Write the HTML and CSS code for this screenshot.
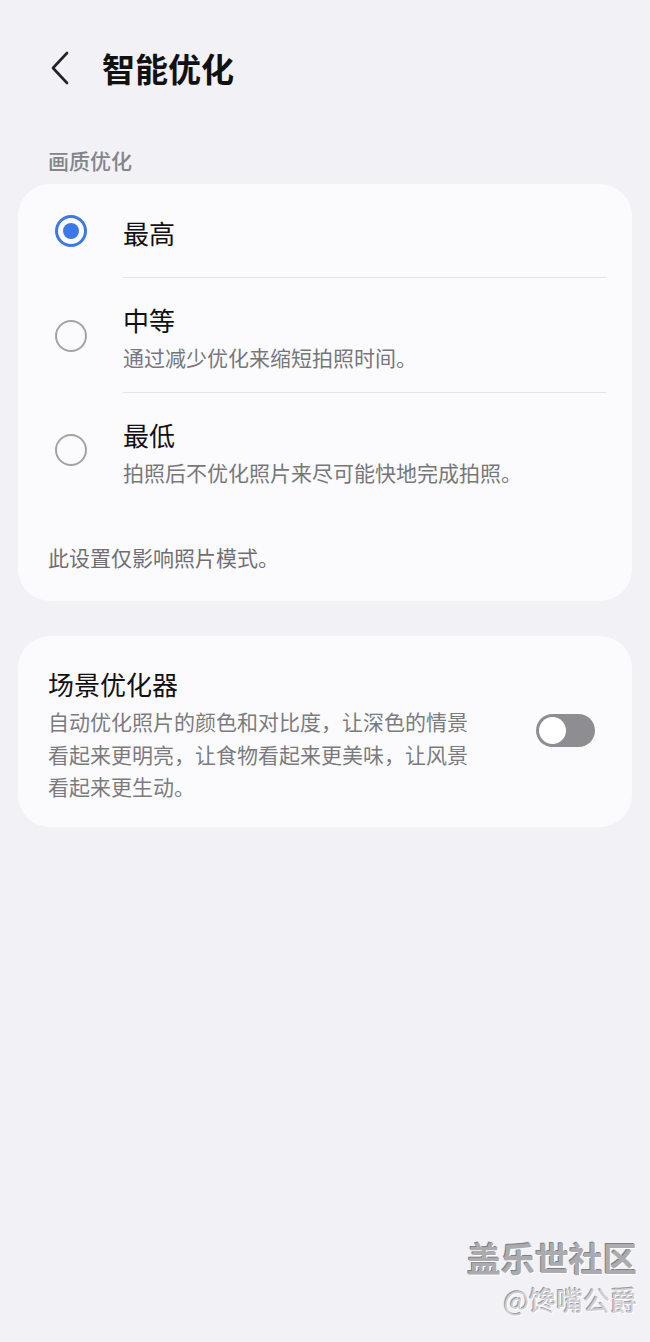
FILE: index.html
```html
<!DOCTYPE html>
<html lang="zh-CN">
<head>
    <meta charset="UTF-8">
    <meta name="viewport" content="width=device-width, initial-scale=1.0">
    <title>智能优化</title>
    <link rel="stylesheet" href="styles.css">
</head>
<body>

    <div class="page">
        <!-- Top bar -->
        <div class="top-bar">
            <svg class="back-icon" width="20" height="34" viewBox="0 0 20 34">
                <path d="M17 2 L3 17 L17 32" fill="none" stroke="#222" stroke-width="2.6" stroke-linecap="round" stroke-linejoin="round"/>
            </svg>
            <h1>智能优化</h1>
        </div>

        <!-- Picture quality options -->
        <p class="section-label">画质优化</p>
        <div class="card">
            <div class="option">
                <span class="radio checked"></span>
                <div class="option-text">
                    <div class="option-title">最高</div>
                </div>
            </div>
            <div class="option">
                <span class="radio"></span>
                <div class="option-text">
                    <div class="option-title">中等</div>
                    <div class="option-desc">通过减少优化来缩短拍照时间。</div>
                </div>
            </div>
            <div class="option last">
                <span class="radio"></span>
                <div class="option-text">
                    <div class="option-title">最低</div>
                    <div class="option-desc">拍照后不优化照片来尽可能快地完成拍照。</div>
                </div>
            </div>
            <p class="card-note">此设置仅影响照片模式。</p>
        </div>

        <!-- Scene optimizer -->
        <div class="card switch-card">
            <div class="switch-text">
                <div class="option-title">场景优化器</div>
                <div class="switch-desc">自动优化照片的颜色和对比度，让深色的情景看起来更明亮，让食物看起来更美味，让风景看起来更生动。</div>
            </div>
            <span class="toggle"><span class="knob"></span></span>
        </div>
    </div>

    <!-- Watermark -->
    <div class="watermark">
        <div class="wm-big">盖乐世社区</div>
        <div class="wm-small">@馋嘴公爵</div>
    </div>

</body>
</html>
```

FILE: styles.css
```css
/* Reset */
* {
    margin: 0;
    padding: 0;
    box-sizing: border-box;
}

body {
    background: #f1f1f6;
    font-family: "Noto Sans CJK SC", "Noto Sans", sans-serif;
    color: #111;
    width: 650px;
    height: 1342px;
    position: relative;
    overflow: hidden;
}

.page {
    padding: 0 18px;
}

/* Header */
.top-bar {
    display: flex;
    align-items: center;
    padding-top: 48px;
    height: 88px;
}

.back-icon {
    margin-left: 32px;
    margin-right: 32px;
}

.top-bar h1 {
    font-size: 33px;
    font-weight: bold;
    line-height: 40px;
    color: #111;
}

.section-label {
    margin-top: 59px;
    padding-left: 30px;
    font-size: 21px;
    line-height: 26px;
    font-weight: 500;
    color: #858589;
    margin-bottom: 11px;
}

/* Cards */
.card {
    background: #fbfbfe;
    border-radius: 32px;
    padding: 0 26px 29px 30px;
}

.option {
    display: flex;
    align-items: center;
}

.radio {
    width: 32px;
    height: 32px;
    border-radius: 50%;
    border: 2px solid #a3a3a6;
    margin-left: 7px;
    margin-right: 36px;
    flex-shrink: 0;
    position: relative;
}

.radio.checked {
    border: 3px solid #3c78e6;
}

.radio.checked::after {
    content: "";
    position: absolute;
    left: 5px;
    top: 5px;
    width: 16px;
    height: 16px;
    border-radius: 50%;
    background: #3c78e6;
}

.option-text {
    flex: 1;
    border-bottom: 1px solid #e3e3e8;
    padding: 24px 0 20px;
}

.option:first-child .option-text {
    padding: 31px 0 26px;
}

.option.last .option-text {
    border-bottom: none;
    padding-bottom: 20px;
}

.option-title {
    font-size: 26px;
    line-height: 36px;
    color: #111;
}

.option-desc {
    margin-top: 4px;
    font-size: 21px;
    line-height: 30px;
    color: #77777b;
}

.card-note {
    margin-top: 35px;
    font-size: 21px;
    line-height: 30px;
    color: #6f6f73;
}

/* Scene optimizer card */
.switch-card {
    margin-top: 35px;
    display: flex;
    align-items: center;
    padding: 30px 37px 24px 30px;
}

.switch-text {
    width: 440px;
}

.switch-desc {
    margin-top: 3px;
    font-size: 21px;
    line-height: 32.5px;
    color: #7b7b7f;
}

.toggle {
    margin-left: auto;
    margin-bottom: 8px;
    width: 59px;
    height: 33px;
    border-radius: 17px;
    background: #8e8e92;
    position: relative;
}

.knob {
    position: absolute;
    left: 3px;
    top: 3px;
    width: 27px;
    height: 27px;
    border-radius: 50%;
    background: #fff;
}

/* Watermark over the page */
.watermark {
    position: absolute;
    right: 13px;
    top: 1236px;
    text-align: right;
}

.wm-big {
    font-size: 34px;
    line-height: 44px;
    font-weight: bold;
    color: #ababaf;
    text-shadow: 1px 1px 0 #fff, -1px -1px 0 #808084;
}

.wm-small {
    margin-top: 2px;
    font-size: 27px;
    line-height: 36px;
    color: #d0d0d4;
    text-shadow: 1px 1px 0 #fff, -1px -1px 0 #9a9a9e;
}
```
